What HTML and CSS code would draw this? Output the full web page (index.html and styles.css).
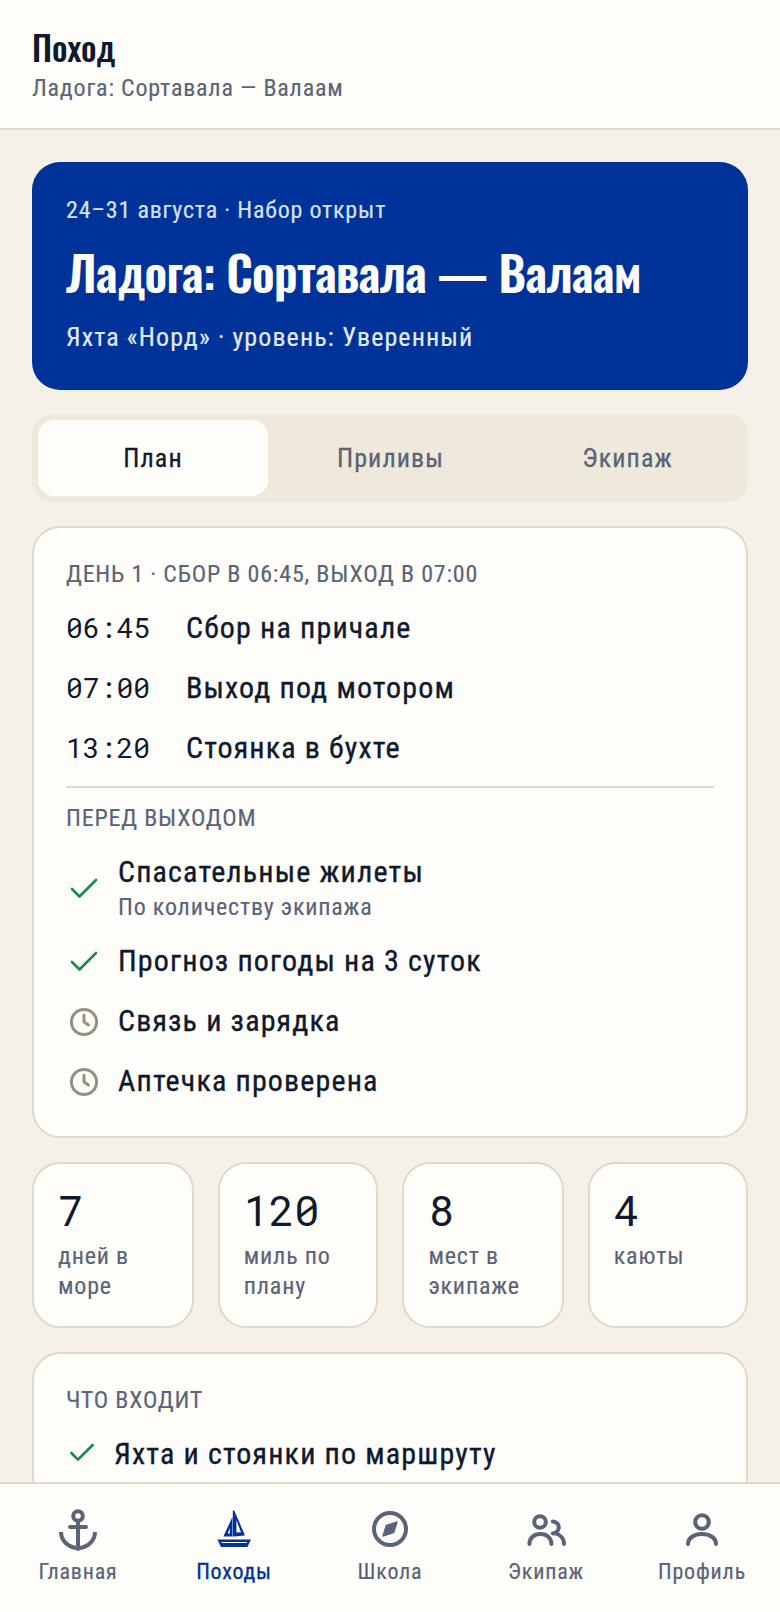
FILE: index.html
```html
<!DOCTYPE html>
<html lang="ru">
<head>
<meta charset="utf-8">
<title>Поход</title>
<link rel="stylesheet" href="styles.css">
</head>
<body>
<div class="app">
  <header class="topbar">
    <h1 class="topbar-title">Поход</h1>
    <p class="topbar-sub">Ладога: Сортавала — Валаам</p>
  </header>
  <main class="content">
    <section class="hero">
      <p class="hero-meta">24–31 августа · Набор открыт</p>
      <h2 class="hero-title">Ладога: Сортавала — Валаам</h2>
      <p class="hero-sub">Яхта «Норд» · уровень: Уверенный</p>
    </section>
    <div class="tabs">
      <div class="tab tab-active">План</div>
      <div class="tab">Приливы</div>
      <div class="tab">Экипаж</div>
    </div>
    <section class="card">
      <h3 class="label">День 1 · сбор в 06:45, выход в 07:00</h3>
      <ul class="schedule">
        <li class="slot"><span class="time">06:45</span><span>Сбор на причале</span></li>
        <li class="slot"><span class="time">07:00</span><span>Выход под мотором</span></li>
        <li class="slot"><span class="time">13:20</span><span>Стоянка в бухте</span></li>
      </ul>
      <hr class="rule">
      <h3 class="label">Перед выходом</h3>
      <ul class="checks">
        <li class="check check-tall">
          <svg class="ico-check" viewBox="0 0 24 24"><path d="M4 12l5 5L20 6"/></svg>
          <div><div>Спасательные жилеты</div><div class="note">По количеству экипажа</div></div>
        </li>
        <li class="check">
          <svg class="ico-check" viewBox="0 0 24 24"><path d="M4 12l5 5L20 6"/></svg>
          <div>Прогноз погоды на 3 суток</div>
        </li>
        <li class="check">
          <svg class="ico-clock" viewBox="0 0 24 24"><circle cx="12" cy="12" r="8.400"/><path d="M12 7.500V12l3 2"/></svg>
          <div>Связь и зарядка</div>
        </li>
        <li class="check">
          <svg class="ico-clock" viewBox="0 0 24 24"><circle cx="12" cy="12" r="8.400"/><path d="M12 7.500V12l3 2"/></svg>
          <div>Аптечка проверена</div>
        </li>
      </ul>
    </section>
    <div class="stats">
      <div class="stat"><div class="num">7</div><div class="cap">дней в море</div></div>
      <div class="stat"><div class="num">120</div><div class="cap">миль по плану</div></div>
      <div class="stat"><div class="num">8</div><div class="cap">мест в экипаже</div></div>
      <div class="stat"><div class="num">4</div><div class="cap">каюты</div></div>
    </div>
    <section class="card">
      <h3 class="label">Что входит</h3>
      <ul class="includes">
        <li class="include">
          <svg class="ico-check-sm" viewBox="0 0 24 24"><path d="M4 12l5 5L20 6"/></svg>
          <div>Яхта и стоянки по маршруту</div>
        </li>
      </ul>
    </section>
  </main>
  <nav class="nav">
    <a class="nav-item">
      <svg class="nav-ico" viewBox="0 0 24 24"><circle cx="12" cy="5.500" r="2.400"/><path d="M12 8v14M8 11h8"/><path class="butt" d="M3.500 13.500a8.500 8 0 0 0 17 0"/></svg>
      <span>Главная</span>
    </a>
    <a class="nav-item nav-active">
      <svg class="nav-ico" viewBox="0 0 24 24"><path class="fill" fill-rule="evenodd" d="M11.200 6 6.700 15.700h4.500zM9.800 11.500 8.900 14.300h1.100z"/><path class="fill" fill-rule="evenodd" d="M11.400 2.700h.7L17.500 15.200 12 15.800h-.6zM13.200 7.500v6.300l2.300-.2z"/><path class="fill" fill-rule="evenodd" d="M3.700 17.300h16.800l-1.800 3.700H5.500zM5.800 18.500v.5h12.600v-.5z"/></svg>
      <span>Походы</span>
    </a>
    <a class="nav-item">
      <svg class="nav-ico" viewBox="0 0 24 24"><circle cx="12" cy="12" r="8"/><path class="needle" d="M15.300 8.700 13.700 13.700 8.700 15.300 10.300 10.300z"/></svg>
      <span>Школа</span>
    </a>
    <a class="nav-item">
      <svg class="nav-ico" viewBox="0 0 24 24"><circle cx="9" cy="8.500" r="2.900"/><path d="M3.700 19.500c0-3 2.300-5 5.500-5s5.500 2 5.500 5M15.400 8.200c1.800.2 3 1.500 3 3s-1.200 2.800-3 3M16.500 14.200c2.500.5 4.500 2.500 4.500 5.300"/></svg>
      <span>Экипаж</span>
    </a>
    <a class="nav-item">
      <svg class="nav-ico" viewBox="0 0 24 24"><circle cx="12" cy="8.500" r="3.400"/><path d="M5 19.500c0-3 3-5 7-5s7 2 7 5"/></svg>
      <span>Профиль</span>
    </a>
  </nav>
</div>
</body>
</html>
```
FILE: styles.css
```css
* { box-sizing: border-box; }
html, body { margin: 0; padding: 0; height: 100%; }
body {
  background: #f5f1e8;
  color: #0f1a2e;
  font-family: Roboto, "Noto Sans", sans-serif;
  font-size: 30px;
  font-weight: 400;
  font-stretch: 75%;
  letter-spacing: 1.15px;
  -webkit-text-stroke: .35px currentColor;
  overflow: hidden;
}
h1, h2, h3, p, ul { margin: 0; padding: 0; }
ul { list-style: none; }
.app { height: 1612px; display: flex; flex-direction: column; }
.topbar {
  flex: none;
  height: 130px;
  padding: 24px 32px 0;
  background: #fffdf9;
  border-bottom: 2px solid #e0d9c7;
}
.topbar-title {
  font-family: Oswald, "Roboto Condensed", sans-serif;
  font-size: 34px;
  font-weight: 500;
  letter-spacing: 0;
  line-height: 46px;
  margin-bottom: 2px;
  -webkit-text-stroke: 0;
}
.topbar-sub { font-size: 24px; line-height: 32px; color: #5a6478; letter-spacing: .8px; -webkit-text-stroke: .15px currentColor; }
.content {
  flex: 1;
  min-height: 0;
  overflow: hidden;
  padding: 32px 32px 0;
  display: flex;
  flex-direction: column;
  gap: 24px;
}
.hero {
  flex: none;
  height: 228px;
  padding: 32px 34px;
  border-radius: 28px;
  background: #003399;
  color: #fffdf9;
}
.hero-meta { font-size: 24px; line-height: 32px; color: #d7e2f7; letter-spacing: .8px; -webkit-text-stroke: .15px currentColor; }
.hero-title {
  font-family: Oswald, "Roboto Condensed", sans-serif;
  font-size: 48px;
  font-weight: 600;
  letter-spacing: -.65px;
  line-height: 68px;
  margin-top: 12px;
  white-space: nowrap;
  -webkit-text-stroke: 0;
}
.hero-sub { font-size: 26px; line-height: 36px; margin-top: 13px; color: #e4ebfa; letter-spacing: 1.1px; -webkit-text-stroke: .15px currentColor; }
.tabs {
  flex: none;
  display: grid;
  grid-template-columns: 230px 245px 229px;
  height: 88px;
  padding: 6px;
  border-radius: 20px;
  background: #efe9dc;
}
.tab {
  display: flex;
  align-items: center;
  justify-content: center;
  border-radius: 16px;
  font-size: 26px;
  letter-spacing: 1.1px;
  color: #5a6478;
  -webkit-text-stroke: .3px currentColor;
}
.tab-active { background: #fffdf9; color: #0f1a2e; }
.card {
  flex: none;
  padding: 30px 32px 26px;
  border: 2px solid #e0d9c7;
  border-radius: 28px;
  background: #fffdf9;
}
.label {
  font-size: 24px;
  font-weight: 400;
  line-height: 32px;
  text-transform: uppercase;
  color: #5a6478;
  letter-spacing: .8px;
  -webkit-text-stroke: .15px currentColor;
}
.schedule { margin-top: 7px; }
.slot { display: flex; height: 60px; align-items: center; }
.time {
  flex: none;
  width: 120px;
  font-family: "Roboto Mono", "DejaVu Sans Mono", monospace;
  font-size: 28px;
  letter-spacing: 0;
  -webkit-text-stroke: 0;
}
.rule { margin: 9px 0 14px; border: 0; border-top: 2px solid #e0d9c7; }
.checks { margin-top: 20px; }
.check { display: flex; align-items: center; min-height: 60px; gap: 16px; }
.check-tall { padding-bottom: 5px; }
.check-tall svg { margin-top: -2px; }
.ico-check, .ico-clock { flex: none; width: 36px; height: 36px; margin-top: 4px; fill: none; stroke-width: 1.8; stroke-linecap: round; stroke-linejoin: round; }
.ico-check { stroke: #1f8a4f; }
.ico-clock { stroke: #95917f; stroke-width: 2; }
.note { font-size: 24px; line-height: 36px; color: #5a6478; letter-spacing: .8px; -webkit-text-stroke: .15px currentColor; }
.stats {
  flex: none;
  display: grid;
  grid-template-columns: 161.8px 160.6px 161.4px 160.2px;
  gap: 24px;
}
.stat {
  height: 166px;
  padding: 22px 24px;
  border: 2px solid #e0d9c7;
  border-radius: 28px;
  background: #fffdf9;
}
.num { font-family: "Roboto Mono", "DejaVu Sans Mono", monospace; font-size: 42px; line-height: 48px; letter-spacing: 0; -webkit-text-stroke: 0; }
.cap { font-size: 24px; line-height: 30px; color: #5a6478; margin-top: 7px; letter-spacing: .8px; -webkit-text-stroke: .15px currentColor; }
.includes { margin-top: 7px; }
.include { display: flex; align-items: center; gap: 16px; height: 60px; }
.ico-check-sm { flex: none; width: 32px; height: 32px; fill: none; stroke: #1f8a4f; stroke-width: 2; stroke-linecap: round; stroke-linejoin: round; }
.nav {
  flex: none;
  height: 130px;
  display: grid;
  grid-template-columns: repeat(5, 1fr);
  padding: 21px 0 0;
  background: #fffdf9;
  border-top: 2px solid #e0d9c7;
}
.nav-item {
  display: flex;
  flex-direction: column;
  align-items: center;
  gap: 6px;
  font-size: 22px;
  color: #5a6478;
  letter-spacing: .8px;
  -webkit-text-stroke: .2px currentColor;
}
.nav-ico { width: 48px; height: 48px; fill: none; stroke: currentColor; stroke-width: 2; stroke-linecap: round; stroke-linejoin: round; }
.nav-ico .fill { fill: currentColor; stroke: none; }
.nav-ico .butt { stroke-linecap: butt; }
.nav-ico .needle { fill: currentColor; stroke-width: 1; }
.nav-active { color: #003399; -webkit-text-stroke: .35px currentColor; }
```
